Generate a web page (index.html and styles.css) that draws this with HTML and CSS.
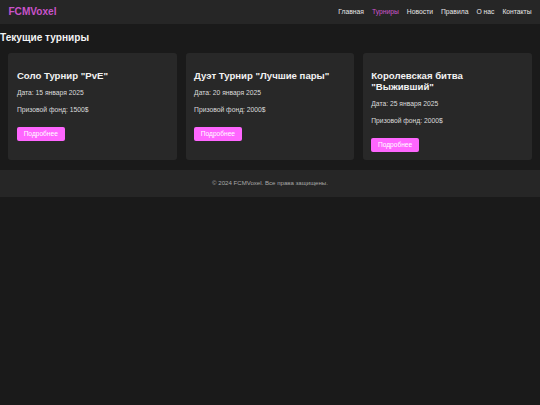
FILE: index.html
```html
<!DOCTYPE html>
<html lang="ru">
<head>
<meta charset="utf-8">
<title>FCMVoxel</title>
<link rel="stylesheet" href="styles.css">
</head>
<body>
<header class="site-header">
  <div class="logo">FCMVoxel</div>
  <nav class="nav">
    <a href="#">Главная</a>
    <a href="#" class="active">Турниры</a>
    <a href="#">Новости</a>
    <a href="#">Правила</a>
    <a href="#">О нас</a>
    <a href="#">Контакты</a>
  </nav>
</header>
<main>
  <h2 class="section-title">Текущие турниры</h2>
  <div class="grid">
    <div class="card">
      <h3 class="card-title">Соло Турнир "PvE"</h3>
      <p>Дата: 15 января 2025</p>
      <p>Призовой фонд: 1500$</p>
      <a href="#" class="btn">Подробнее</a>
    </div>
    <div class="card">
      <h3 class="card-title">Дуэт Турнир "Лучшие пары"</h3>
      <p>Дата: 20 января 2025</p>
      <p>Призовой фонд: 2000$</p>
      <a href="#" class="btn">Подробнее</a>
    </div>
    <div class="card">
      <h3 class="card-title">Королевская битва "Выживший"</h3>
      <p>Дата: 25 января 2025</p>
      <p>Призовой фонд: 2000$</p>
      <a href="#" class="btn">Подробнее</a>
    </div>
  </div>
</main>
<footer class="site-footer">© 2024 FCMVoxel. Все права защищены.</footer>
</body>
</html>
```
FILE: styles.css
```css
html, body {
  margin: 0;
  padding: 0;
  background: #1a1a1a;
  color: #e0e0e0;
  font-family: "Liberation Sans", Arial, sans-serif;
  font-size: 6.75px;
  line-height: 1.6;
}

.site-header {
  display: flex;
  justify-content: space-between;
  align-items: center;
  background: #262626;
  padding: 4px 8.44px;
  height: 24px;
  box-sizing: border-box;
}

.logo {
  font-size: 10.1px;
  font-weight: bold;
  color: #c953c9;
  line-height: 16px;
}

.nav {
  display: flex;
  gap: 8px;
}

.nav a {
  color: #e6e6e6;
  text-decoration: none;
  font-size: 6.75px;
}

.nav a.active {
  color: #cc55cc;
}

.section-title {
  margin: 8.44px 0 0;
  font-size: 10.1px;
  line-height: 12px;
  color: #f2f2f2;
}

.grid {
  display: grid;
  grid-template-columns: repeat(3, 1fr);
  gap: 8.44px;
  padding: 8.44px;
}

.card {
  background: #282828;
  border-radius: 3px;
  padding: 8.44px;
}

.card-title {
  margin: 8.3px 0 6.75px;
  font-size: 9.6px;
  line-height: 11.2px;
  color: #f2f2f2;
}

.card p {
  margin: 6.75px 0;
  color: #dcdcdc;
}

.btn {
  display: inline-block;
  margin-top: 3.9px;
  background: #ff66ff;
  color: #ffffff;
  text-decoration: none;
  font-size: 6.6px;
  padding: 3.3px 6.75px;
  border-radius: 2px;
  line-height: 7.6px;
}

.site-footer {
  margin-top: 1px;
  background: #262626;
  color: #a8a8a8;
  text-align: center;
  font-size: 6.1px;
  padding: 8.44px;
  line-height: 10.8px;
}
```
